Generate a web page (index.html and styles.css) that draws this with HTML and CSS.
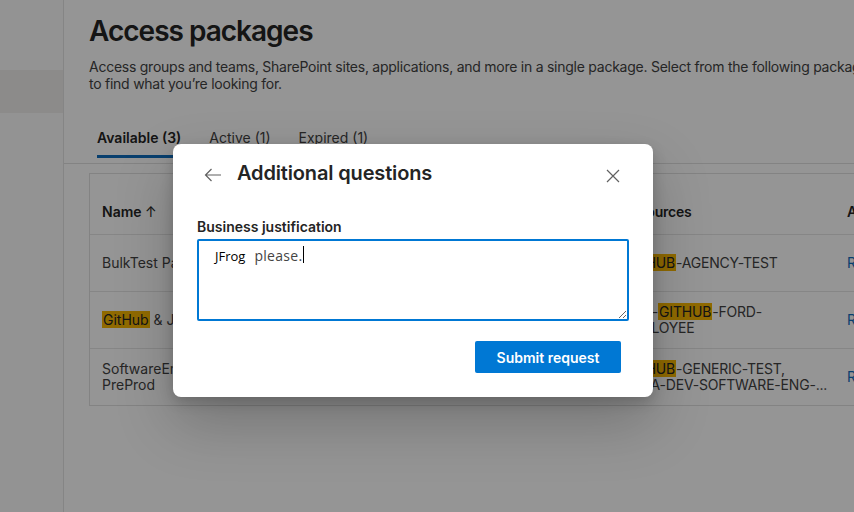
FILE: index.html
```html
<!DOCTYPE html>
<html lang="en">
<head>
<meta charset="utf-8">
<title>Access packages</title>
<link rel="stylesheet" href="styles.css">
</head>
<body>
<div class="app">
  <aside class="sidebar">
    <div class="nav-item selected"></div>
  </aside>
  <main class="main">
    <header class="page-head">
      <h1 class="title">Access packages</h1>
      <p class="desc">Access groups and teams, SharePoint sites, applications, and more in a single package. Select from the following packages or search<br>to find what you’re looking for.</p>
    </header>
    <nav class="tabs">
      <span class="tab active">Available (3)</span>
      <span class="tab">Active (1)</span>
      <span class="tab">Expired (1)</span>
    </nav>
    <section class="card">
      <div class="row head">
        <div class="c-name">Name <span class="sort">↑</span></div>
        <div class="c-desc">Description</div>
        <div class="c-res">Resources</div>
        <div class="c-act">Actions</div>
      </div>
      <div class="row">
        <div class="c-name">BulkTest Package</div>
        <div class="c-desc">Bulk test</div>
        <div class="c-res"><mark>GITHUB</mark>-AGENCY-TEST</div>
        <div class="c-act"><a class="link">Request</a></div>
      </div>
      <div class="row">
        <div class="c-name"><mark>GitHub</mark> &amp; JFrog</div>
        <div class="c-desc">Access to repositories</div>
        <div class="c-res">ADO-<mark>GITHUB</mark>-FORD-<br>EMPLOYEE</div>
        <div class="c-act"><a class="link">Request</a></div>
      </div>
      <div class="row">
        <div class="c-name">SoftwareEng<br>PreProd</div>
        <div class="c-desc">Pre-production</div>
        <div class="c-res"><mark>GITHUB</mark>-GENERIC-TEST,<br>AADA-DEV-SOFTWARE-ENG-...</div>
        <div class="c-act"><a class="link">Request</a></div>
      </div>
    </section>
  </main>
</div>

<div class="overlay">
  <div class="dialog" role="dialog" aria-label="Additional questions">
    <div class="dlg-head">
      <button class="icon-btn back" aria-label="Back">
        <svg width="18" height="14" viewBox="0 0 18 14"><path d="M17 7H1.5M7.5 1L1.5 7l6 6" fill="none" stroke="#616161" stroke-width="1.2"/></svg>
      </button>
      <h2 class="dlg-title">Additional questions</h2>
      <button class="icon-btn close" aria-label="Close">
        <svg width="14" height="14" viewBox="0 0 14 14"><path d="M1 1l12 12M13 1L1 13" fill="none" stroke="#616161" stroke-width="1.2"/></svg>
      </button>
    </div>
    <div class="dlg-body">
      <label class="field-label">Business justification</label>
      <div class="textarea"><span class="jfrog">JFrog</span><span class="typed">please.</span><span class="caret"></span></div>
    </div>
    <div class="dlg-foot">
      <button class="primary">Submit request</button>
    </div>
  </div>
</div>
</body>
</html>
```

FILE: styles.css
```css
* { box-sizing: border-box; }
html, body { margin: 0; padding: 0; }
body {
  width: 854px;
  height: 512px;
  overflow: hidden;
  background: #ffffff;
  font-family: Inter, "Noto Sans", sans-serif;
  color: #242424;
  position: relative;
}
.app {
  display: flex;
  height: 512px;
}
.sidebar {
  width: 64px;
  flex: none;
  background: #fcfcfc;
  border-right: 1px solid #e4e4e4;
  padding-top: 70px;
}
.nav-item.selected {
  height: 43px;
  background: #f0eeec;
}
.main {
  flex: 1;
  min-width: 0;
}
.page-head {
  padding: 13px 0 0 25px;
}
.title {
  margin: 0;
  font-size: 28px;
  line-height: 36px;
  font-weight: 600;
  letter-spacing: -1px;
  color: #242424;
}
.desc {
  margin: 9px 0 0;
  font-size: 14px;
  line-height: 17px;
  letter-spacing: -0.25px;
  color: #424242;
  white-space: nowrap;
}
.tabs {
  display: flex;
  gap: 28px;
  margin-top: 26px;
  padding: 0 0 5px 33px;
  border-bottom: 1px solid #e0e0e0;
}
.tab {
  padding: 10px 0 7px;
  font-size: 14px;
  line-height: 20px;
  color: #424242;
  border-bottom: 3px solid transparent;
}
.tab.active {
  font-weight: 600;
  color: #242424;
  border-bottom-color: #0f6cbd;
}
.card {
  margin: 9px 0 0 25px;
  width: 900px;
  border: 1px solid #e0e0e0;
  padding-top: 16px;
}
.row {
  display: grid;
  grid-template-columns: 12px 260px 260px 225px 1fr;
  height: 57px;
  align-items: center;
  border-top: 1px solid #e6e6e6;
  font-size: 14px;
  line-height: 16px;
  color: #424242;
}
.row::before { content: ""; }
.row.head {
  height: 44px;
  border-top: none;
  font-weight: 600;
  color: #242424;
}
.c-res { letter-spacing: -0.2px; }
.sort { font-weight: 400; }
mark {
  background: #f7b600;
  color: #242424;
  padding: 0 1px;
}
.link { color: #0f6cbd; }

/* overlay + dialog */
.overlay {
  position: absolute;
  inset: 0;
  background: rgba(0, 0, 0, 0.415);
  padding: 144px 0 0 173px;
}
.dialog {
  width: 480px;
  height: 253px;
  background: #fff;
  border-radius: 8px;
  box-shadow: 0 26px 58px rgba(0,0,0,0.22), 0 5px 14px rgba(0,0,0,0.18);
  padding: 0 24px;
  display: flex;
  flex-direction: column;
}
.dlg-head {
  display: flex;
  align-items: center;
  height: 60px;
  padding-top: 2px;
}
.icon-btn {
  border: 0;
  background: none;
  padding: 0;
  display: flex;
  align-items: center;
  justify-content: center;
  cursor: pointer;
}
.back {
  width: 18px;
  height: 18px;
  margin-left: 7px;
  margin-right: 15px;
}
.dlg-title {
  margin: 0;
  flex: 1;
  font-size: 20px;
  line-height: 26px;
  font-weight: 600;
  letter-spacing: -0.15px;
  color: #242424;
  margin-top: -4px;
}
.close {
  width: 14px;
  height: 14px;
  margin-right: 9px;
  margin-top: 1px;
}
.dlg-body {
  display: flex;
  flex-direction: column;
  padding-top: 14px;
}
.field-label {
  font-size: 14px;
  line-height: 18px;
  font-weight: 600;
  color: #242424;
  margin-bottom: 3px;
}
.textarea {
  height: 82px;
  border: 2px solid #0078d4;
  border-radius: 2px;
  padding: 5px 10px 0 16px;
  overflow: auto;
  resize: both;
  display: flex;
  align-items: baseline;
}
.jfrog {
  font-family: "Open Sans", "Noto Sans", sans-serif;
  font-size: 13px;
  color: #000;
  margin-right: 9px;
  line-height: 20px;
}
.typed {
  font-family: "Open Sans", "Noto Sans", sans-serif;
  font-size: 14px;
  color: #444;
  letter-spacing: 0.3px;
}
.caret {
  display: inline-block;
  width: 1px;
  height: 17px;
  background: #000;
  margin-left: 1px;
  align-self: flex-start;
  margin-top: 0;
}
.dlg-foot {
  display: flex;
  justify-content: flex-end;
  padding: 20px 8px 0 0;
}
.primary {
  width: 146px;
  height: 32px;
  border: 0;
  border-radius: 2px;
  background: #0078d4;
  color: #fff;
  font-family: Inter, "Noto Sans", sans-serif;
  font-size: 14px;
  font-weight: 600;
}
```
